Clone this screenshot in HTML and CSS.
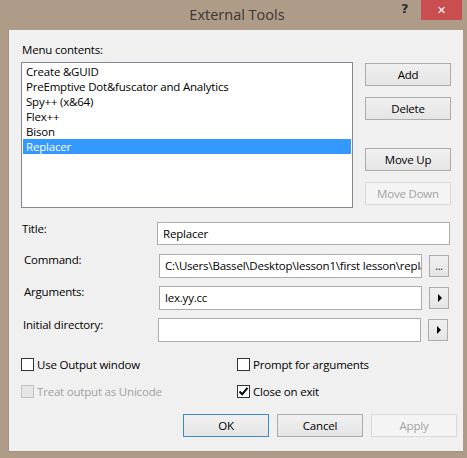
FILE: index.html
```html
<!DOCTYPE html>
<html>
<head>
<meta charset="utf-8">
<link rel="stylesheet" href="styles.css">
</head>
<body>
<div class="window">
  <div class="titlebar">
    <div class="title">External Tools</div>
    <div class="help">?</div>
    <div class="close">✕</div>
  </div>
  <div class="client">
    <div class="caption">Menu contents:</div>
    <div class="top">
      <div class="listbox">
        <div class="item">Create &amp;GUID</div>
        <div class="item">PreEmptive Dot&amp;fuscator and Analytics</div>
        <div class="item">Spy++ (x&amp;64)</div>
        <div class="item">Flex++</div>
        <div class="item">Bison</div>
        <div class="item selected">Replacer</div>
      </div>
      <div class="sidebtns">
        <div class="btn">Add</div>
        <div class="btn">Delete</div>
        <div class="btn gap">Move Up</div>
        <div class="btn disabled">Move Down</div>
      </div>
    </div>
    <div class="fields">
      <div class="row">
        <div class="label first">Title:</div>
        <div class="textbox wide">Replacer</div>
      </div>
      <div class="row">
        <div class="label">Command:</div>
        <div class="textbox">C:\Users\Bassel\Desktop\lesson1\first lesson\replacer.exe</div>
        <div class="minibtn dots">...</div>
      </div>
      <div class="row">
        <div class="label">Arguments:</div>
        <div class="textbox">lex.yy.cc</div>
        <div class="minibtn"><span class="arrow"></span></div>
      </div>
      <div class="row">
        <div class="label mid">Initial directory:</div>
        <div class="textbox"></div>
        <div class="minibtn"><span class="arrow"></span></div>
      </div>
    </div>
    <div class="checks">
      <div class="check"><span class="box"></span>Use Output window</div>
      <div class="check"><span class="box"></span>Prompt for arguments</div>
      <div class="check disabled"><span class="box"></span>Treat output as Unicode</div>
      <div class="check"><span class="box"><svg width="11" height="11" viewBox="0 0 11 11"><path d="M1.5 5.5 L4.2 8.3 L9.5 1.8" fill="none" stroke="#000" stroke-width="2"/></svg></span>Close on exit</div>
    </div>
    <div class="bottom">
      <div class="btn default">OK</div>
      <div class="btn">Cancel</div>
      <div class="btn disabled">Apply</div>
    </div>
  </div>
</div>
</body>
</html>
```

FILE: styles.css
```css
html, body {
  margin: 0;
  padding: 0;
}
body {
  width: 467px;
  height: 458px;
  overflow: hidden;
  font-family: "Open Sans", sans-serif;
  font-size: 11.5px;
  letter-spacing: -0.2px;
  color: #000;
}
.window {
  width: 467px;
  height: 458px;
  background: #ae9c89;
  display: flex;
  flex-direction: column;
  box-sizing: border-box;
  padding: 0 4px 6px 8px;
}
.titlebar {
  height: 30px;
  flex: none;
  position: relative;
}
.title {
  position: absolute;
  left: 179px;
  top: 5px;
  font-size: 14.5px;
  letter-spacing: 0;
  color: #3b3632;
  width: 100px;
  text-align: center;
  white-space: nowrap;
}
.help {
  position: absolute;
  left: 393px;
  top: 1px;
  font-size: 13px;
  font-weight: bold;
  color: #2f2f2f;
  font-family: "DejaVu Sans", sans-serif;
}
.close {
  position: absolute;
  left: 413px;
  top: 0;
  width: 41px;
  height: 20px;
  background: #c94e4f;
  color: #fff;
  font-size: 11px;
  font-weight: bold;
  display: flex;
  align-items: center;
  justify-content: center;
  font-family: "DejaVu Sans", sans-serif;
}
.client {
  flex: 1;
  background: #f0f0f0;
  border: 1px solid #a3927f;
  border-right: none;
  border-top: none;
  box-sizing: border-box;
  padding: 0 0 0 12px;
}
.caption {
  height: 15px;
  line-height: 15px;
  margin-top: 12px;
  padding-left: 1px;
}
.top {
  display: flex;
  margin-top: 5px;
  height: 146px;
}
.listbox {
  width: 332px;
  height: 146px;
  box-sizing: border-box;
  border: 1px solid #828790;
  background: #fff;
  padding: 1px 1px;
  flex: none;
}
.item {
  height: 15px;
  line-height: 15px;
  padding-left: 3px;
  white-space: nowrap;
}
.item.selected {
  background: #3399ff;
  color: #fff;
}
.sidebtns {
  margin-left: 12px;
  display: flex;
  flex-direction: column;
  padding-top: 1px;
}
.btn {
  width: 86px;
  height: 23px;
  flex: none;
  box-sizing: border-box;
  border: 1px solid #acacac;
  background: linear-gradient(#f0f0f0, #e5e5e5);
  display: flex;
  align-items: center;
  justify-content: center;
  margin-bottom: 11px;
}
.sidebtns .btn.gap {
  margin-top: 17px;
}
.btn.disabled {
  background: #f4f4f4;
  border-color: #dadada;
  color: #a2a2a2;
}
.btn.default {
  border-color: #3c8bd0;
}
.fields {
  margin-top: 14px;
  display: flex;
  flex-direction: column;
  gap: 9px;
}
.row {
  display: flex;
  height: 23px;
  align-items: flex-start;
}
.label {
  width: 135px;
  padding-left: 3px;
  margin-top: -2px;
  flex: none;
}
.label.first {
  padding-left: 1px;
  margin-top: -1px;
}
.label.mid {
  padding-left: 2px;
  margin-top: -1px;
}
.textbox {
  width: 263px;
  height: 24px;
  box-sizing: border-box;
  border: 1px solid #abadb3;
  background: #fff;
  line-height: 22px;
  padding-left: 5px;
  white-space: nowrap;
  overflow: hidden;
  flex: none;
}
.textbox.wide {
  width: 293px;
  height: 23px;
  line-height: 21px;
}
.minibtn {
  width: 20px;
  height: 22px;
  margin-left: 7px;
  margin-top: 1px;
  box-sizing: border-box;
  border: 1px solid #acacac;
  background: linear-gradient(#f0f0f0, #e5e5e5);
  display: flex;
  align-items: center;
  justify-content: center;
  flex: none;
}
.minibtn.dots {
  font-size: 10px;
  align-items: flex-end;
  padding-bottom: 5px;
  line-height: 10px;
}
.arrow {
  width: 0;
  height: 0;
  border-top: 4px solid transparent;
  border-bottom: 4px solid transparent;
  border-left: 4px solid #000;
  margin-left: 1px;
}
.checks {
  margin-top: 16px;
  display: grid;
  grid-template-columns: 216px 200px;
  row-gap: 12px;
}
.check {
  display: flex;
  align-items: center;
  height: 15px;
  white-space: nowrap;
}
.box {
  width: 13px;
  height: 13px;
  box-sizing: border-box;
  border: 1px solid #333;
  background: #fff;
  margin-right: 3px;
  display: flex;
  align-items: center;
  justify-content: center;
}
.check.disabled {
  color: #a0a0a0;
}
.check.disabled .box {
  border-color: #c2c2c2;
  background: #e6e6e6;
}
.bottom {
  display: flex;
  gap: 8px;
  margin-top: 15px;
  padding-left: 162px;
}
.bottom .btn {
  margin-bottom: 0;
}
```
